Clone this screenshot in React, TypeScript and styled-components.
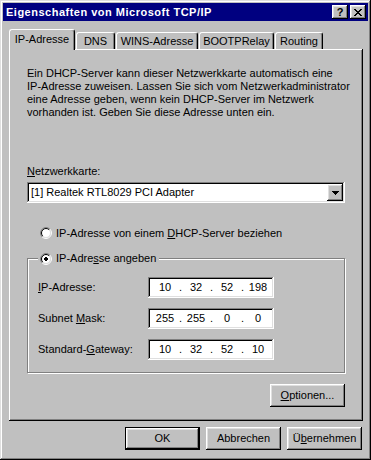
import React from 'react';
import styled, { createGlobalStyle, css } from 'styled-components';

const Global = createGlobalStyle`
  html, body { margin: 0; padding: 0; background: #c0c0c0; }
  body { font-family: "Liberation Sans", Arial, sans-serif; font-size: 11px; color: #000; }
  * { box-sizing: border-box; }
  u { text-decoration: underline; text-underline-offset: 1px; }
`;

const raisedShadow = css`
  box-shadow: inset -1px -1px #000, inset 1px 1px #fff, inset -2px -2px #808080, inset 2px 2px #dfdfdf;
`;

const sunkenShadow = css`
  box-shadow: inset -1px -1px #fff, inset 1px 1px #808080, inset -2px -2px #dfdfdf, inset 2px 2px #000;
`;

const Window = styled.div`
  width: 371px;
  height: 460px;
  background: #c0c0c0;
  padding: 3px;
  display: flex;
  flex-direction: column;
  box-shadow: inset -1px -1px #000, inset 1px 1px #dfdfdf, inset -2px -2px #808080, inset 2px 2px #fff;
`;

const TitleBar = styled.div`
  height: 18px;
  background: #000080;
  color: #fff;
  display: flex;
  align-items: center;
  padding: 0 2px 0 3px;
`;

const Title = styled.div`
  flex: 1;
  font-weight: bold;
  font-size: 11px;
  line-height: 13px;
  letter-spacing: 0.5px;
  white-space: nowrap;
`;

const CaptionButtons = styled.div`
  display: flex;
  gap: 2px;
`;

const CaptionButton = styled.div`
  width: 16px;
  height: 14px;
  background: #c0c0c0;
  color: #000;
  font-weight: bold;
  font-size: 11px;
  line-height: 12px;
  display: flex;
  align-items: center;
  justify-content: center;
  ${raisedShadow}
`;

const Body = styled.div`
  padding: 8px 5px 0 6px;
  display: flex;
  flex-direction: column;
`;

const TabRow = styled.div`
  display: flex;
  align-items: flex-end;
  gap: 1px;
  height: 20px;
`;

const Tab = styled.div<{ $w: number; $active?: boolean }>`
  position: relative;
  width: ${p => p.$w}px;
  height: ${p => (p.$active ? 21 : 17)}px;
  margin-bottom: ${p => (p.$active ? -1 : 0)}px;
  z-index: ${p => (p.$active ? 2 : 0)};
  padding-top: ${p => (p.$active ? 3 : 2)}px;
  background: #c0c0c0;
  text-align: center;
  line-height: 13px;
  white-space: nowrap;
  border-top: 1px solid #fff;
  border-left: 1px solid #fff;
  border-right: 1px solid #000;
  border-radius: 3px 3px 0 0;
  box-shadow: inset -1px 0 #808080;
`;

const Panel = styled.div`
  position: relative;
  z-index: 1;
  width: 354px;
  height: 372px;
  padding: 18px 18px 0 18px;
  display: flex;
  flex-direction: column;
  background: #c0c0c0;
  box-shadow: inset -1px -1px #000, inset 1px 1px #fff, inset -2px -2px #808080;
`;

const Intro = styled.p`
  margin: 0;
  line-height: 13px;
  white-space: nowrap;
`;

const FieldLabel = styled.div`
  margin-top: 46px;
  line-height: 13px;
`;

const Select = styled.div`
  margin-top: 4px;
  height: 21px;
  width: 318px;
  background: #fff;
  padding: 2px;
  display: flex;
  align-items: stretch;
  ${sunkenShadow}
`;

const SelectText = styled.div`
  flex: 1;
  padding-left: 2px;
  line-height: 17px;
  white-space: nowrap;
`;

const DropButton = styled.div`
  width: 16px;
  height: 17px;
  background: #c0c0c0;
  display: flex;
  align-items: center;
  justify-content: center;
  ${raisedShadow}
`;

const RadioRow = styled.div`
  margin-top: 23px;
  padding-left: 13px;
  display: flex;
  align-items: center;
  gap: 4px;
  height: 14px;
  line-height: 13px;
`;

const Group = styled.fieldset`
  margin: 12px 0 0 0;
  width: 318px;
  padding: 12px 10px 12px 10px;
  border: 1px solid #808080;
  box-shadow: inset 1px 1px #fff, 1px 1px #fff;
  min-inline-size: 0;
`;

const GroupLegend = styled.legend`
  padding: 0 3px 0 2px;
  background: #c0c0c0;
  line-height: 13px;
`;

const LegendInner = styled.span`
  display: flex;
  align-items: center;
  gap: 4px;
  height: 13px;
`;

const AddressGrid = styled.div`
  display: grid;
  grid-template-columns: 110px 126px;
  row-gap: 10px;
  align-items: center;
`;

const AddressLabel = styled.div`
  line-height: 13px;
  white-space: nowrap;
`;

const AddressField = styled.div`
  height: 21px;
  background: #fff;
  padding: 2px 0 0 4px;
  display: flex;
  line-height: 17px;
  ${sunkenShadow}
`;

const Octet = styled.span`
  width: 26px;
  text-align: center;
`;

const Dot = styled.span`
  width: 5px;
  text-align: center;
`;

const OptionsRow = styled.div`
  margin-top: 11px;
  width: 318px;
  display: flex;
  justify-content: flex-end;
`;

const Button = styled.div<{ $default?: boolean }>`
  width: 75px;
  height: 23px;
  background: #c0c0c0;
  display: flex;
  align-items: center;
  justify-content: center;
  line-height: 13px;
  ${p =>
    p.$default
      ? css`
          box-shadow: inset 0 0 0 1px #000, inset -2px -2px #000, inset 2px 2px #fff,
            inset -3px -3px #808080, inset 3px 3px #dfdfdf;
        `
      : raisedShadow}
`;

const Footer = styled.div`
  margin-top: 6px;
  padding-right: 1px;
  display: flex;
  justify-content: flex-end;
  gap: 6px;
`;

const CloseGlyph = () => (
  <svg width="8" height="7" viewBox="0 0 8 7" shapeRendering="crispEdges">
    <path
      fill="#000"
      d="M0 0h2v1H0zM6 0h2v1H6zM1 1h2v1H1zM5 1h2v1H5zM2 2h4v1H2zM3 3h2v1H3zM2 4h4v1H2zM1 5h2v1H1zM5 5h2v1H5zM0 6h2v1H0zM6 6h2v1H6z"
    />
  </svg>
);

const ArrowGlyph = () => (
  <svg width="7" height="4" viewBox="0 0 7 4" shapeRendering="crispEdges">
    <path fill="#000" d="M0 0h7v1H0zM1 1h5v1H1zM2 2h3v1H2zM3 3h1v1H3z" />
  </svg>
);

const Radio = ({ checked }: { checked?: boolean }) => (
  <svg width="12" height="12" viewBox="0 0 12 12" style={{ flex: 'none' }}>
    <circle cx="6" cy="6" r="4.5" fill="#fff" />
    <path d="M2.111 9.889A5.5 5.5 0 0 1 9.889 2.111" fill="none" stroke="#808080" strokeWidth="1" />
    <path d="M9.889 2.111A5.5 5.5 0 0 1 2.111 9.889" fill="none" stroke="#fff" strokeWidth="1" />
    <path d="M2.818 9.182A4.5 4.5 0 0 1 9.182 2.818" fill="none" stroke="#000" strokeWidth="1" />
    <path d="M9.182 2.818A4.5 4.5 0 0 1 2.818 9.182" fill="none" stroke="#dfdfdf" strokeWidth="1" />
    {checked && (
      <path fill="#000" shapeRendering="crispEdges" d="M5 4h2v1H5zM4 5h4v2H4zM5 7h2v1H5z" />
    )}
  </svg>
);

const tabs = [
  { label: 'IP-Adresse', w: 66, active: true },
  { label: 'DNS', w: 39 },
  { label: 'WINS-Adresse', w: 82 },
  { label: 'BOOTPRelay', w: 75 },
  { label: 'Routing', w: 48 },
];

const addresses: { label: React.ReactNode; octets: string[] }[] = [
  { label: <><u>I</u>P-Adresse:</>, octets: ['10', '32', '52', '198'] },
  { label: <>Subnet <u>M</u>ask:</>, octets: ['255', '255', '0', '0'] },
  { label: <>Standard-<u>G</u>ateway:</>, octets: ['10', '32', '52', '10'] },
];

export default function App() {
  return (
    <>
      <Global />
      <Window>
        <TitleBar>
          <Title>Eigenschaften von Microsoft TCP/IP</Title>
          <CaptionButtons>
            <CaptionButton>?</CaptionButton>
            <CaptionButton>
              <CloseGlyph />
            </CaptionButton>
          </CaptionButtons>
        </TitleBar>
        <Body>
          <TabRow>
            {tabs.map(t => (
              <Tab key={t.label} $w={t.w} $active={t.active}>
                {t.label}
              </Tab>
            ))}
          </TabRow>
          <Panel>
            <Intro>
              Ein DHCP-Server kann dieser Netzwerkkarte automatisch eine
              <br />
              IP-Adresse zuweisen. Lassen Sie sich vom Netzwerkadministrator
              <br />
              eine Adresse geben, wenn kein DHCP-Server im Netzwerk
              <br />
              vorhanden ist. Geben Sie diese Adresse unten ein.
            </Intro>
            <FieldLabel>
              <u>N</u>etzwerkkarte:
            </FieldLabel>
            <Select>
              <SelectText>[1] Realtek RTL8029 PCI Adapter</SelectText>
              <DropButton>
                <ArrowGlyph />
              </DropButton>
            </Select>
            <RadioRow>
              <Radio />
              <span>
                IP-Adresse von einem <u>D</u>HCP-Server beziehen
              </span>
            </RadioRow>
            <Group>
              <GroupLegend>
                <LegendInner>
                  <Radio checked />
                  <span>
                    IP-Adre<u>s</u>se angeben
                  </span>
                </LegendInner>
              </GroupLegend>
              <AddressGrid>
                {addresses.map((a, i) => (
                  <React.Fragment key={i}>
                    <AddressLabel>{a.label}</AddressLabel>
                    <AddressField>
                      {a.octets.map((o, j) => (
                        <React.Fragment key={j}>
                          {j > 0 && <Dot>.</Dot>}
                          <Octet>{o}</Octet>
                        </React.Fragment>
                      ))}
                    </AddressField>
                  </React.Fragment>
                ))}
              </AddressGrid>
            </Group>
            <OptionsRow>
              <Button>
                <span>
                  <u>O</u>ptionen...
                </span>
              </Button>
            </OptionsRow>
          </Panel>
          <Footer>
            <Button $default>OK</Button>
            <Button>Abbrechen</Button>
            <Button>
              <span>
                Ü<u>b</u>ernehmen
              </span>
            </Button>
          </Footer>
        </Body>
      </Window>
    </>
  );
}
